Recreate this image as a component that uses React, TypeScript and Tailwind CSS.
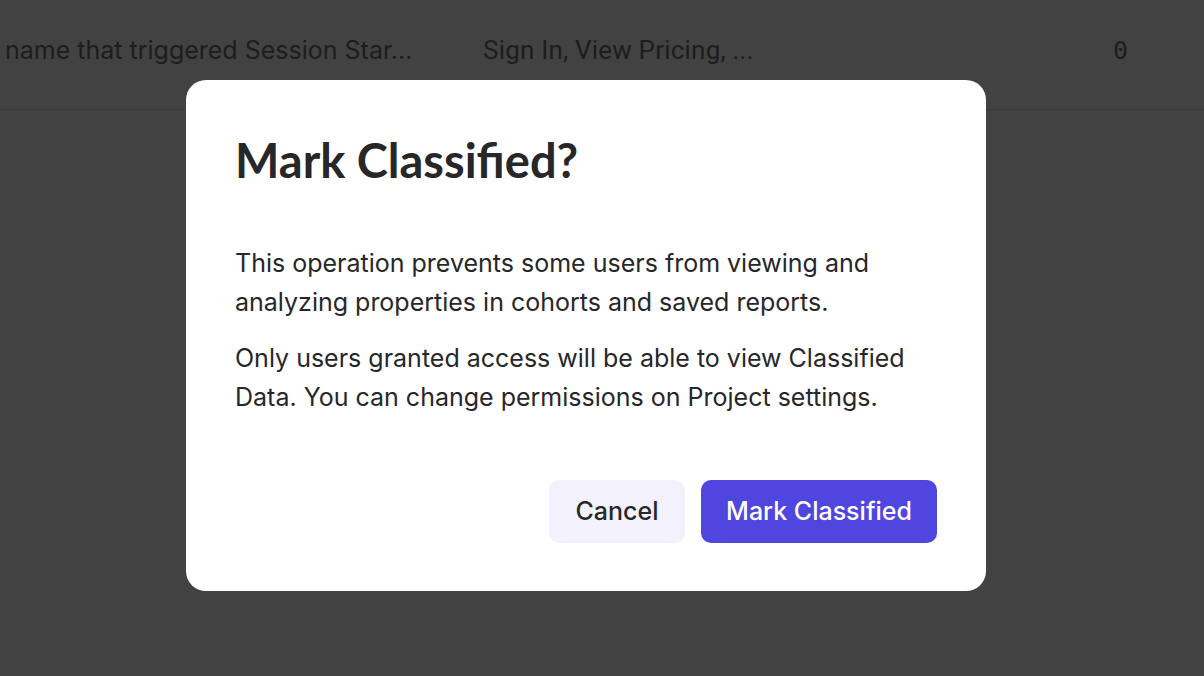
import React from "react";

export default function App() {
  return (
    <div className="relative w-[1204px] h-[676px] overflow-hidden bg-[#424242]">
      <div className="h-[110px] border-b border-[#3a3a3a] flex items-center pb-[8px] text-[#1d1d1d]">
        <div className="w-[478px] pl-[5px] whitespace-nowrap text-[25px]" style={{ fontFamily: "Inter, sans-serif" }}>
          name that triggered Session Star...
        </div>
        <div className="w-[635px] pl-[5px] whitespace-nowrap text-[26px] tracking-[0.2px]" style={{ fontFamily: "Roboto, sans-serif" }}>
          Sign In, View Pricing, ...
        </div>
        <div className="whitespace-nowrap text-[25px]" style={{ fontFamily: "'DejaVu Sans Mono', monospace" }}>0</div>
      </div>

      <div
        className="absolute left-[186px] top-[80px] w-[800px] h-[511px] bg-white rounded-[20px] px-[49px] pt-[54px] pb-[48px] flex flex-col text-[#27272a]"
        style={{ fontFamily: "Inter, sans-serif" }}
      >
        <h1 className="text-[47px] font-bold leading-[52px]" style={{ fontFamily: "Lato, sans-serif" }}>
          Mark Classified?
        </h1>
        <div className="mt-[58px] text-[25px] leading-[39px]">
          <p>This operation prevents some users from viewing and analyzing properties in cohorts and saved reports.</p>
          <p className="mt-[17px]">Only users granted access will be able to view Classified Data. You can change permissions on Project settings.</p>
        </div>
        <div className="mt-auto flex justify-end gap-[16px]">
          <button className="h-[63px] w-[136px] rounded-[10px] bg-[#f3f2fc] text-[25px] font-medium text-[#27272a]">
            Cancel
          </button>
          <button className="h-[63px] w-[236px] rounded-[10px] bg-[#4f46e0] text-[25px] font-medium text-white">
            Mark Classified
          </button>
        </div>
      </div>
    </div>
  );
}
